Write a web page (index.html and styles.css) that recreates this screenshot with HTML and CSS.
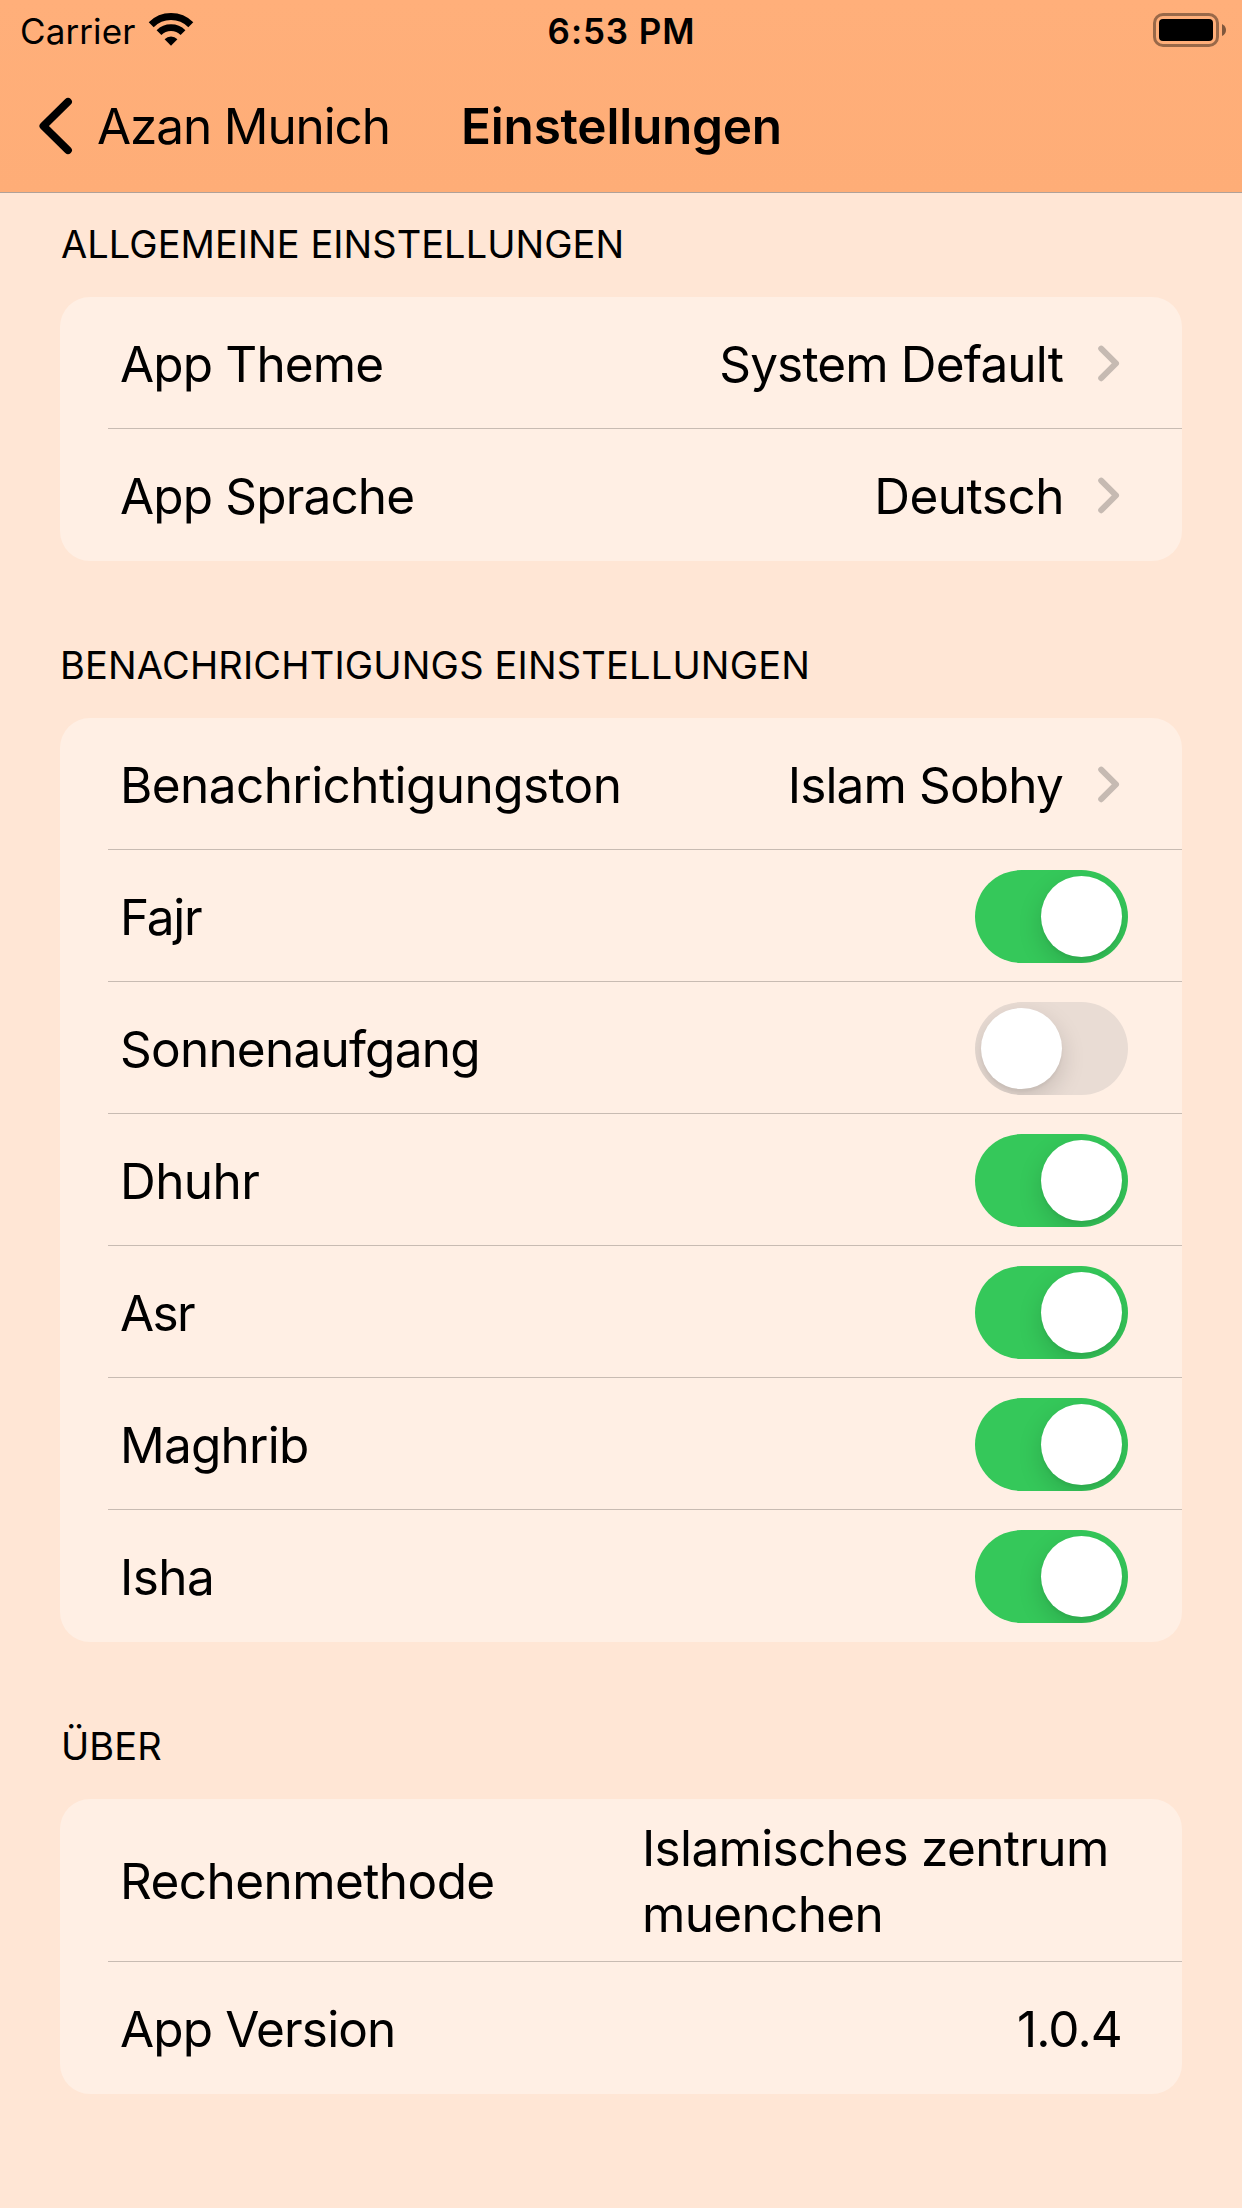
FILE: index.html
```
<!DOCTYPE html>
<html lang="de">
<head>
  <meta charset="utf-8">
  <title>Einstellungen</title>
  <link rel="stylesheet" href="styles.css">
</head>
<body>
  <svg class="symbols" width="0" height="0" aria-hidden="true">
    <symbol id="chevron" viewBox="0 0 22 37">
      <path d="M3.2 3.6 18 18.4 3.2 33.2" fill="none" stroke="currentColor" stroke-width="6" stroke-linecap="round" stroke-linejoin="round"/>
    </symbol>
  </svg>

  <header class="header">
    <div class="status">
      <div class="status-left">
        <span>Carrier</span>
        <svg class="wifi" viewBox="0 0 48 36" width="48" height="36">
          <g fill="none" stroke="#000">
            <path d="M4.2 12.8A28 28 0 0 1 43.8 12.8" stroke-width="7"/>
            <path d="M12 20.6A17 17 0 0 1 36 20.6" stroke-width="6.8"/>
          </g>
          <path d="M17.6 27.2A9.2 9.2 0 0 1 30.4 27.2L24 33.7Z"/>
        </svg>
      </div>
      <span class="clock">6:53 PM</span>
      <div class="status-right">
        <svg class="battery" viewBox="0 0 74 34" width="74" height="34">
          <rect x="1.5" y="1.5" width="63" height="31" rx="8.5" fill="none" stroke="#000" stroke-opacity=".4" stroke-width="3"/>
          <rect x="6" y="6" width="54" height="22" rx="4"/>
          <path d="M69 11Q73 13 73 17T69 23Z" fill-opacity=".5"/>
        </svg>
      </div>
    </div>
    <nav class="nav">
      <a class="back">
        <svg viewBox="0 0 35 58" width="35" height="58">
          <path d="M30 4.8 5.4 29 30 53.2" fill="none" stroke="#000" stroke-width="7.8" stroke-linecap="round" stroke-linejoin="round"/>
        </svg>
        <span>Azan Munich</span>
      </a>
      <h1 class="title">Einstellungen</h1>
    </nav>
  </header>

  <main>
    <section class="group">
      <h2 class="group-title">ALLGEMEINE EINSTELLUNGEN</h2>
      <div class="card">
        <div class="row"><span>App Theme</span><span class="value">System Default<svg class="chevron"><use href="#chevron"/></svg></span></div>
        <div class="row"><span>App Sprache</span><span class="value"><span class="loose">Deutsch</span><svg class="chevron"><use href="#chevron"/></svg></span></div>
      </div>
    </section>

    <section class="group">
      <h2 class="group-title spaced">BENACHRICHTIGUNGS EINSTELLUNGEN</h2>
      <div class="card">
        <div class="row"><span class="wide">Benachrichtigungston</span><span class="value">Islam Sobhy<svg class="chevron"><use href="#chevron"/></svg></span></div>
        <div class="row"><span class="tight">Fajr</span><span class="toggle on"></span></div>
        <div class="row"><span class="medium">Sonnenaufgang</span><span class="toggle"></span></div>
        <div class="row"><span class="wide">Dhuhr</span><span class="toggle on"></span></div>
        <div class="row"><span class="tighter">Asr</span><span class="toggle on"></span></div>
        <div class="row"><span class="medium">Maghrib</span><span class="toggle on"></span></div>
        <div class="row"><span class="wide">Isha</span><span class="toggle on"></span></div>
      </div>
    </section>

    <section class="group">
      <h2 class="group-title">ÜBER</h2>
      <div class="card">
        <div class="row tall"><span class="wide">Rechenmethode</span><span class="method">Islamisches zentrum muenchen</span></div>
        <div class="row"><span>App Version</span><span>1.0.4</span></div>
      </div>
    </section>
  </main>
</body>
</html>
```
FILE: styles.css
```
* {
  box-sizing: border-box;
}

body {
  margin: 0;
  min-height: 2208px;
  background: #ffe6d5;
  color: #000;
  font: 400 49.5px/66px Inter, "Liberation Sans", sans-serif;
  letter-spacing: -0.85px;
}

.symbols {
  position: absolute;
}

/* Header */
.header {
  height: 193px;
  border-bottom: 1px solid #b0a199;
  background: linear-gradient(#ffaf7a, #fead77);
}

.status {
  display: grid;
  grid-template-columns: 1fr auto 1fr;
  height: 60px;
  padding: 9px 15px 7px 20px;
  font-size: 35px;
  line-height: 44px;
  letter-spacing: 0.1px;
}

.status-left {
  display: flex;
  gap: 12px;
}

.wifi {
  margin-top: 3px;
}

.clock {
  padding-right: 4px;
  font-weight: 600;
  letter-spacing: 0.9px;
}

.status-right {
  display: flex;
  justify-content: flex-end;
}

.battery {
  margin-top: 4px;
}

.nav {
  display: grid;
  grid-template-columns: 1fr auto 1fr;
  align-items: center;
  height: 132px;
  padding: 0 37px 0 38px;
}

.back {
  display: flex;
  align-items: center;
  gap: 24px;
  letter-spacing: -1.12px;
}

.title {
  margin: 0;
  font-size: 49.5px;
  font-weight: 600;
  letter-spacing: -0.22px;
}

/* Groups */
.group {
  padding: 0 60px;
}

.group-title {
  margin: 0;
  padding: 28px 0 30px 1px;
  font-size: 38px;
  font-weight: 400;
  line-height: 46px;
  letter-spacing: 0.05px;
}

.group-title.spaced {
  padding-left: 0;
  letter-spacing: 0.18px;
}

.group + .group .group-title {
  padding-top: 81px;
}

.card {
  border-radius: 30px;
  background: #ffefe4;
}

.row {
  display: flex;
  align-items: center;
  justify-content: space-between;
  height: 132px;
  margin-left: 48px;
  padding: 2px 60px 0 12px;
  border-bottom: 1px solid #c8bbb2;
}

.row:last-child {
  border-bottom-color: transparent;
}

.row.tall {
  height: 163px;
}

.value {
  display: flex;
  align-items: center;
  gap: 35px;
}

.chevron {
  width: 22px;
  height: 37px;
  margin-right: 2px;
  color: #c6bab2;
}

.method {
  width: 480px;
  letter-spacing: -0.67px;
}

/* Optical tracking */
.loose { margin-right: -1px; letter-spacing: -0.5px; }
.wide { letter-spacing: -0.58px; }
.medium { letter-spacing: -0.77px; }
.tight { letter-spacing: -1.25px; }
.tighter { letter-spacing: -1.7px; }

/* Switches */
.toggle {
  display: flex;
  width: 153px;
  height: 93px;
  margin-right: -6px;
  padding: 6px;
  border-radius: 47px;
  overflow: hidden;
  background: #e9dcd4;
}

.toggle::before {
  content: "";
  width: 81px;
  height: 81px;
  border-radius: 50%;
  background: #fff;
  box-shadow: 0 9px 24px rgba(0, 0, 0, 0.15), 0 3px 3px rgba(0, 0, 0, 0.04);
}

.toggle.on {
  justify-content: flex-end;
  background: #35c85a;
}
```
